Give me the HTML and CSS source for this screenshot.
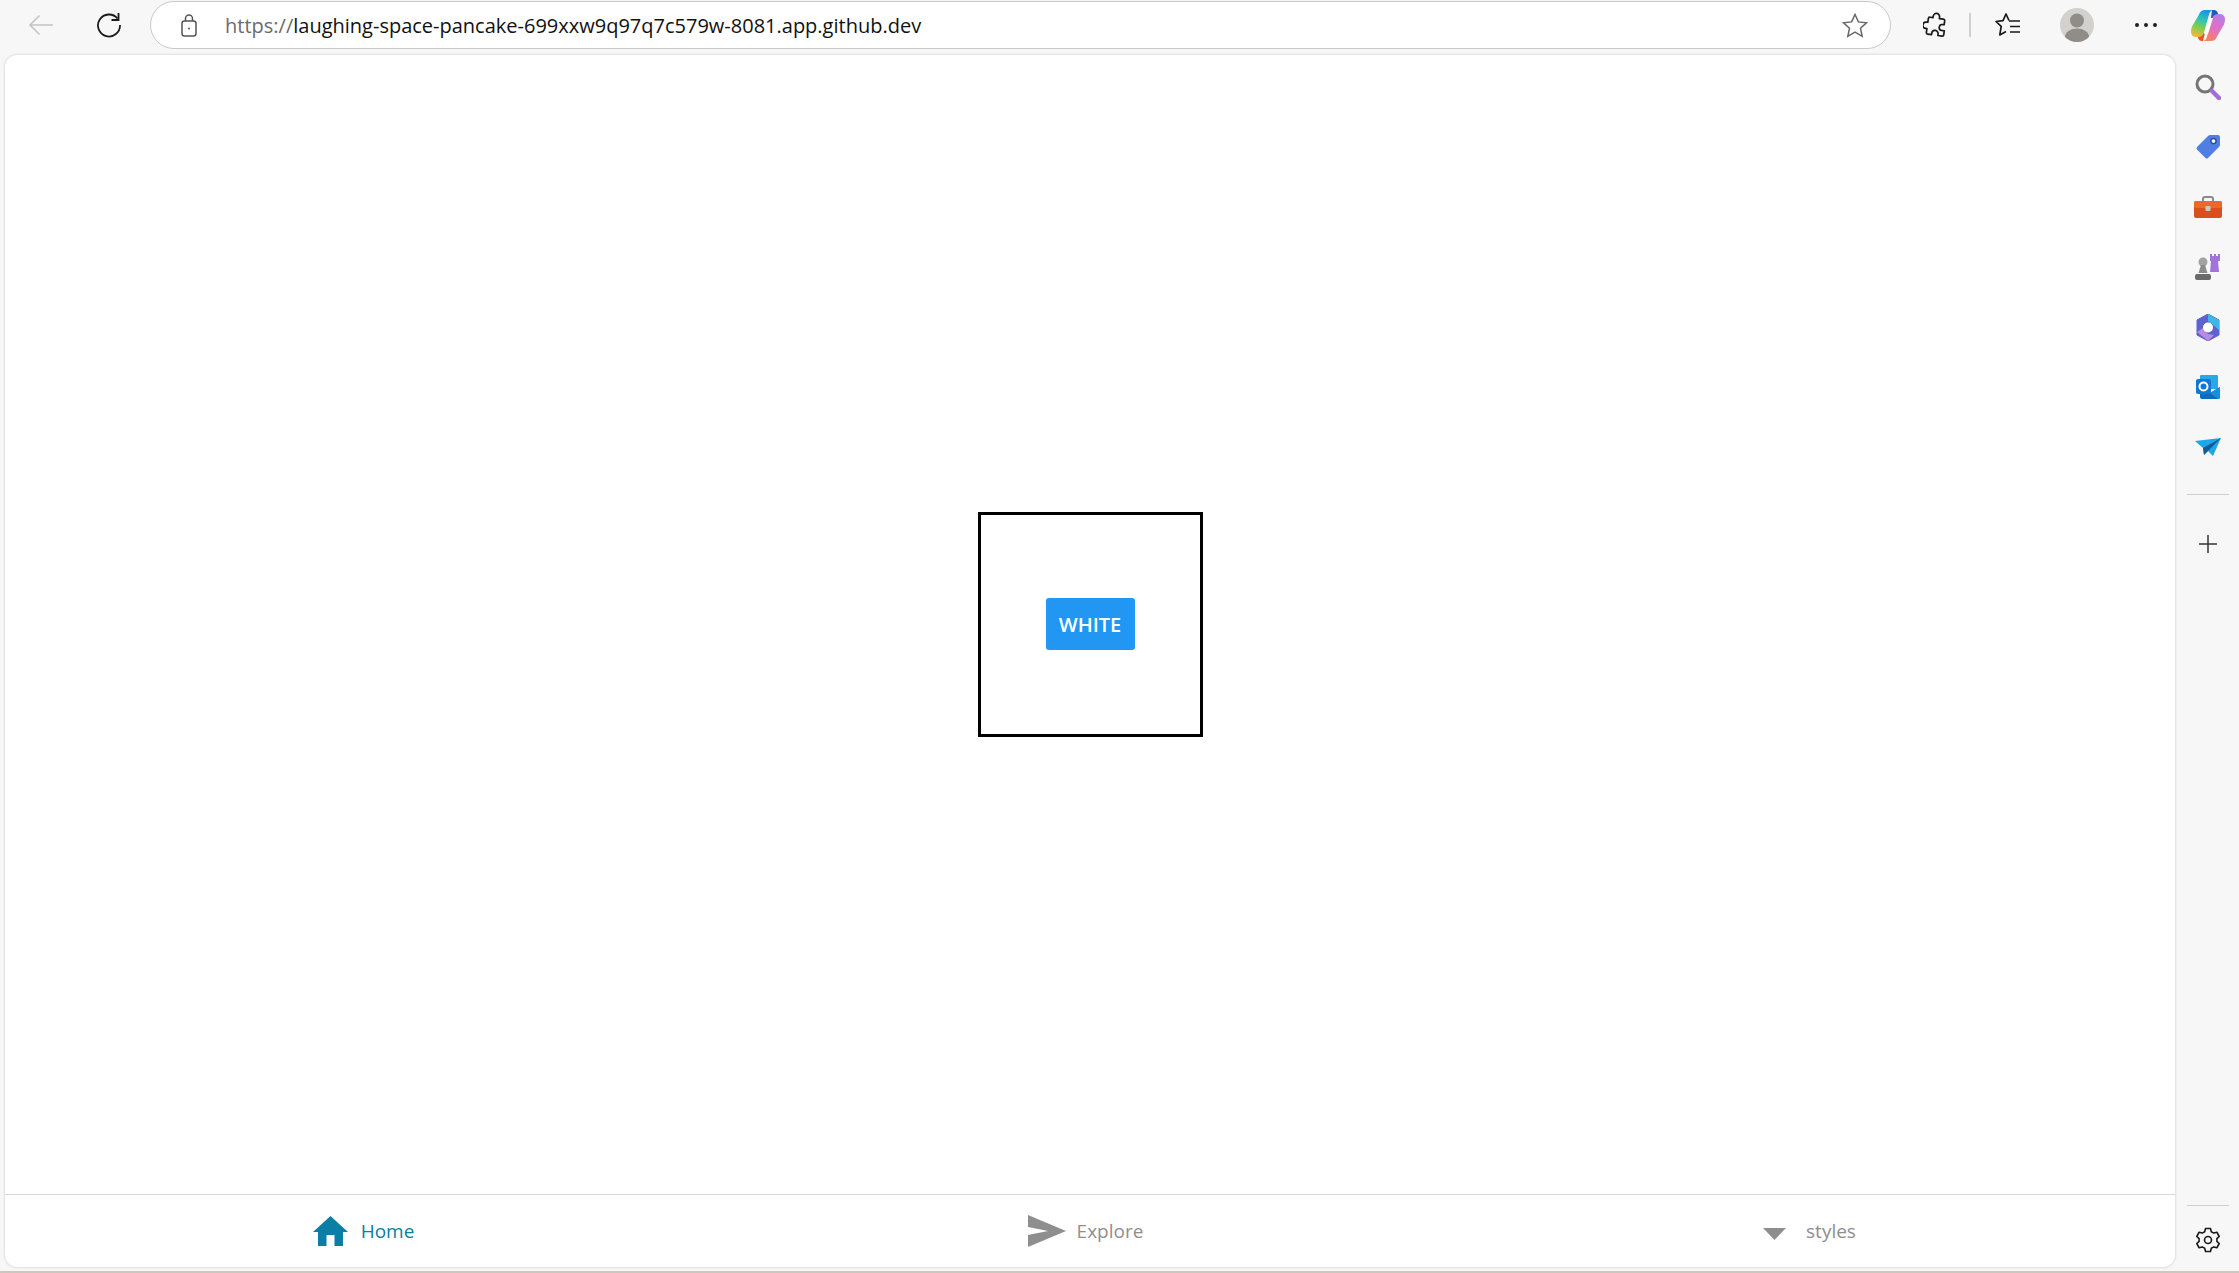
FILE: index.html
```html
<!DOCTYPE html>
<html lang="en">
<head>
    <meta charset="UTF-8">
    <meta name="viewport" content="width=device-width, initial-scale=1.0">
    <title>laughing-space-pancake</title>
    <link rel="stylesheet" href="styles.css">
</head>
<body>
    <div class="toolbar">
        <div class="tool-btn">
            <svg width="26" height="24" viewBox="0 0 26 24" fill="none" stroke="#c4c4c4" stroke-width="1.6"><path d="M25 12H2M11.500 2.500 2 12l9.500 9.500"/></svg>
        </div>
        <div class="tool-btn">
            <svg width="26" height="26" viewBox="0 0 26 26" fill="none" stroke="#1a1a1a" stroke-width="1.8"><path d="M21.500 6.500A11 11 0 1 0 24 13"/><path d="M22.500 1v7h-7"/></svg>
        </div>
        <div class="address-bar">
            <svg class="lock" width="16" height="23" viewBox="0 0 16 23" fill="none" stroke="#555" stroke-width="1.5"><rect x="1" y="7" width="14" height="15" rx="2.500"/><path d="M4.500 7V4.500a3.500 3.500 0 0 1 7 0V7"/><circle cx="8" cy="14.500" r="1" fill="#555" stroke="none"/></svg>
            <div class="url"><span class="url-scheme">https://</span>laughing-space-pancake-699xxw9q97q7c579w-8081.app.github.dev</div>
            <svg class="star" width="26" height="25" viewBox="0 0 26 25" fill="none" stroke="#666" stroke-width="1.5"><path d="M13 1.500l3.400 7.400 8.100.9-6 5.500 1.700 8-7.200-4.100-7.200 4.100 1.700-8-6-5.500 8.100-.9z"/></svg>
        </div>
        <div class="tool-btn ext-btn">
            <svg width="24" height="26" viewBox="0 0 24 26" fill="none" stroke="#1a1a1a" stroke-width="1.7" stroke-linejoin="round"><path d="M9 4.500a3.200 3.200 0 0 1 6.400 0V6h4.100q1.500 0 1.500 1.500v4h-1.500a3 3 0 0 0 0 6H22v4q0 1.500-1.500 1.500h-4.200v-1.500a3.200 3.200 0 0 0-6.400 0V23H6q-1.500 0-1.500-1.500v-3.800H3.200a3.200 3.200 0 0 1 0-6.400h1.300V7.500Q4.500 6 6 6h3z" transform="rotate(8 12 13)"/></svg>
        </div>
        <div class="tool-divider"></div>
        <div class="tool-btn fav-btn">
            <svg width="26" height="24" viewBox="0 0 26 24" fill="none" stroke="#1a1a1a" stroke-width="1.7" stroke-linejoin="round"><path d="M14 7.500 11 1 8 7.700l-7 .8 5.200 4.800L4.800 22 11 18.500"/><path d="M14 8h11M15 13.500h10M15 19h10"/></svg>
        </div>
        <div class="tool-btn avatar-btn">
            <svg width="34" height="34" viewBox="0 0 34 34"><defs><clipPath id="avatar-clip"><circle cx="17" cy="17" r="17"/></clipPath></defs><circle cx="17" cy="17" r="17" fill="#d3d1ce"/><g clip-path="url(#avatar-clip)" fill="#908c88"><circle cx="17" cy="12.500" r="7"/><ellipse cx="17" cy="29" rx="12" ry="8.500"/></g></svg>
        </div>
        <div class="tool-btn dots-btn">
            <span class="dot"></span><span class="dot"></span><span class="dot"></span>
        </div>
        <div class="copilot">
            <svg width="34" height="33" viewBox="0 0 34 33">
                <defs>
                    <linearGradient id="cp-a" x1=".6" y1="0" x2=".3" y2="1"><stop offset="0" stop-color="#1d8fe6"/><stop offset=".35" stop-color="#2fc4b8"/><stop offset=".65" stop-color="#7ccf4e"/><stop offset="1" stop-color="#f6b73c"/></linearGradient>
                    <linearGradient id="cp-b" x1=".7" y1="0" x2=".3" y2="1"><stop offset="0" stop-color="#b77be8"/><stop offset=".55" stop-color="#e56fc0"/><stop offset="1" stop-color="#f4845a"/></linearGradient>
                </defs>
                <path d="M21 1h2q3 0 4 3.500L28 9h-8z" fill="#1f56c9"/>
                <path d="M12 32h-1q-3 0-4-3.500L6 24h8z" fill="#ef4f2f"/>
                <path d="M8 5.500Q9.500 1 14 1h8q-3 .5-4 4.500l-5 18Q11.500 28 7 28H5.500Q0 28 0 22.500q0-2 1-5z" fill="url(#cp-a)"/>
                <path d="M26 27.500Q24.500 32 20 32h-8q3-.5 4-4.500l5-18Q22.500 5 27 5h1.500Q34 5 34 10.500q0 2-1 5z" fill="url(#cp-b)"/>
                <path d="M18.500 9h3.500l-5 16h-4z" fill="#fff" opacity=".95"/>
            </svg>
        </div>
    </div>

    <div class="window">
        <div class="page">
            <main class="page-body">
                <div class="square">
                    <button class="white-btn">WHITE</button>
                </div>
            </main>
            <nav class="tab-bar">
                <div class="tab tab-active">
                    <svg class="tab-icon" width="35" height="30" viewBox="0 0 35 30"><path d="M17.500 0 35 16h-5v14h-8.500V19h-8v11H5V16H0z" fill="#0a7ea4"/></svg>
                    <span>Home</span>
                </div>
                <div class="tab tab-explore">
                    <svg class="tab-icon" width="38" height="32" viewBox="0 0 38 32"><path d="M0 0 38 16 0 32V20l20-4L0 12z" fill="#8e8e8f"/></svg>
                    <span>Explore</span>
                </div>
                <div class="tab tab-styles">
                    <svg class="tab-icon tab-icon-small" width="23" height="12" viewBox="0 0 23 12"><path d="M0 0h23L11.500 12z" fill="#8e8e8f"/></svg>
                    <span>styles</span>
                </div>
            </nav>
        </div>

        <aside class="sidebar">
            <div class="side-item">
                <svg width="26" height="26" viewBox="0 0 26 26" fill="none"><circle cx="10" cy="10" r="8" stroke="#757575" stroke-width="3"/><path d="M17 17l7 7" stroke="#a26cdc" stroke-width="4.500" stroke-linecap="round"/></svg>
            </div>
            <div class="side-item">
                <svg width="26" height="26" viewBox="0 0 26 26"><path d="M15 1h8q2 0 2 2v8q0 1-1 2L13 24q-1 1-2.500 0L2 15.500q-1-1 0-2.500L13 2q1-1 2-1z" fill="#4f7fe3"/><circle cx="18.500" cy="7" r="2.600" fill="#fff" stroke="#2f4ea8" stroke-width="1.500"/></svg>
            </div>
            <div class="side-item">
                <svg width="28" height="22" viewBox="0 0 28 22"><path d="M9 6V3q0-2 2-2h6q2 0 2 2v3" fill="none" stroke="#8a8a8a" stroke-width="2"/><rect y="5" width="28" height="17" rx="2" fill="#d9501e"/><rect y="5" width="28" height="7" rx="2" fill="#ea6a2c"/><rect x="11.500" y="10" width="5" height="5" rx="1" fill="#c8c8c8"/></svg>
            </div>
            <div class="side-item">
                <svg width="28" height="28" viewBox="0 0 28 28"><circle cx="9" cy="9" r="4.500" fill="#a2a2a2"/><path d="M7 12h4l2.500 8h-9z" fill="#8a8a8a"/><rect x="1" y="21" width="16" height="6" rx="2" fill="#6a6a6a"/><path d="M16 1h2v2h2V1h2v2h2V1h2v7h-2l1 11H16l1-11h-1z" fill="#a373dc"/></svg>
            </div>
            <div class="side-item">
                <svg width="24" height="27" viewBox="0 0 24 27"><path d="M12 0 23 6v15l-11 6-11-6V6z" fill="#5d62cf" stroke="#5d62cf" stroke-linejoin="round"/><path d="M12 0 23 6v10l-6-5-5-4z" fill="#3fb6e8"/><path d="M1 18l6-4 5 6 6 1-6 6z" fill="#b98ae0"/><circle cx="12" cy="13.500" r="5" fill="#fff"/></svg>
            </div>
            <div class="side-item">
                <svg width="24" height="24" viewBox="0 0 24 24"><rect x="4" width="18" height="14" rx="1" fill="#28a8ea"/><path d="M4 12l10 6 10-6v10q0 2-2 2H6q-2 0-2-2z" fill="#0a6cbd"/><path d="M14 18l10-6v10q0 2-2 2z" fill="#1490df"/><rect y="4" width="15" height="15" rx="2" fill="#0f78d4"/><circle cx="7.500" cy="11.500" r="4" fill="none" stroke="#fff" stroke-width="2"/></svg>
            </div>
            <div class="side-item">
                <svg width="26" height="18" viewBox="0 0 26 18"><path d="M0 3 26 0 18 18l-5-5-4 4-1-7z" fill="#1ea6ea"/><path d="M8 10 26 0 9 17z" fill="#145a94"/></svg>
            </div>
            <div class="side-divider"></div>
            <div class="side-add">
                <svg width="20" height="20" viewBox="0 0 20 20" stroke="#333" stroke-width="1.500"><path d="M10 1v18M1 10h18"/></svg>
            </div>
            <div class="side-bottom">
                <div class="side-divider side-divider-low"></div>
                <svg width="24" height="26" viewBox="0 0 24 26" fill="none" stroke="#1a1a1a" stroke-width="1.600" stroke-linejoin="round"><path d="M9.500 1.500h5l.8 3.200 2.500 1.400 3.100-.9 2.300 4.300-2.300 2.200v2.600l2.300 2.200-2.300 4.300-3.100-.9-2.500 1.400-.8 3.200h-5l-.8-3.200-2.500-1.400-3.100.9L.8 16.500 3.100 14.300v-2.600L.8 9.500l2.300-4.300 3.100.9 2.500-1.400z"/><circle cx="12" cy="13" r="3.500"/></svg>
            </div>
        </aside>
    </div>
</body>
</html>
```

FILE: styles.css
```css
* {
    box-sizing: border-box;
}

body {
    margin: 0;
    height: 100vh;
    display: flex;
    flex-direction: column;
    overflow: hidden;
    background-color: #f7f7f7;
    border-bottom: 2px solid #cfc6bc;
    font-family: "Open Sans", "Noto Sans", sans-serif;
}

/* browser chrome, top */
.toolbar {
    height: 55px;
    flex: none;
    display: flex;
    align-items: center;
    padding: 0 0 5px 7px;
}

.tool-btn {
    width: 68px;
    height: 50px;
    flex: none;
    display: flex;
    align-items: center;
    justify-content: center;
}

.address-bar {
    width: 1741px;
    height: 48px;
    flex: none;
    margin-left: 7px;
    margin-right: 10px;
    padding: 0 22px 0 30px;
    display: flex;
    align-items: center;
    background: #ffffff;
    border: 1px solid #c9c9c9;
    border-radius: 24px;
}

.lock {
    flex: none;
}

.url {
    flex: 1;
    margin-left: 28px;
    font-family: "Open Sans", sans-serif;
    font-size: 20px;
    color: #111;
    white-space: nowrap;
}

.url-scheme {
    color: #6b6b6b;
}

.star {
    flex: none;
}

.tool-divider {
    width: 2px;
    height: 24px;
    flex: none;
    background: #d0d0d0;
}

.fav-btn {
    margin-left: 3px;
}

.avatar-btn {
    margin-left: 1px;
}

.dots-btn {
    gap: 5px;
    margin-left: 1px;
}

.dot {
    width: 4px;
    height: 4px;
    border-radius: 50%;
    background: #222;
}

.copilot {
    flex: none;
    display: flex;
    justify-content: center;
    margin-left: 11px;
}

/* page + sidebar */
.window {
    flex: 1;
    display: flex;
    min-height: 0;
    padding: 0 0 4px 5px;
}

.page {
    width: 2170px;
    flex: none;
    display: flex;
    flex-direction: column;
    background: #ffffff;
    border-radius: 12px;
    box-shadow: 0 0 3px rgba(0, 0, 0, 0.2);
}

.page-body {
    flex: 1;
    display: flex;
    align-items: center;
    justify-content: center;
}

.square {
    width: 225px;
    height: 225px;
    border: 3px solid #000;
    display: flex;
    align-items: center;
    justify-content: center;
}

.white-btn {
    width: 89px;
    height: 52px;
    margin-bottom: 1px;
    padding: 0;
    border: none;
    border-radius: 3px;
    background: #2196f3;
    color: #fff;
    font-family: "Open Sans", sans-serif;
    font-size: 20px;
    font-weight: 600;
}

.tab-bar {
    height: 73px;
    flex: none;
    display: flex;
    border-top: 1px solid #d8d8d8;
}

.tab {
    flex: 1;
    display: flex;
    align-items: center;
    justify-content: center;
    gap: 13px;
    padding-right: 9px;
    color: #8e8e8f;
    font-size: 19px;
    font-weight: 500;
}

.tab-active {
    color: #0a7ea4;
    padding-left: 2px;
}

.tab-explore {
    gap: 11px;
    padding-left: 0;
}

.tab-styles {
    padding-left: 2px;
}

.tab-icon {
    flex: none;
}

.tab-icon-small {
    margin-right: 7px;
    margin-top: 6px;
}

.sidebar {
    flex: 1;
    display: flex;
    flex-direction: column;
    align-items: center;
    padding-top: 2px;
    padding-left: 2px;
}

.side-item {
    height: 60px;
    flex: none;
    display: flex;
    align-items: center;
    justify-content: center;
}

.side-divider {
    width: 42px;
    height: 1px;
    flex: none;
    margin-top: 17px;
    background: #cfcfcf;
}

.side-add {
    margin-top: 39px;
    height: 20px;
    flex: none;
}

.side-bottom {
    margin-top: auto;
    display: flex;
    flex-direction: column;
    align-items: center;
    gap: 21px;
    padding-bottom: 14px;
}

.side-divider-low {
    margin-top: 0;
}
```
